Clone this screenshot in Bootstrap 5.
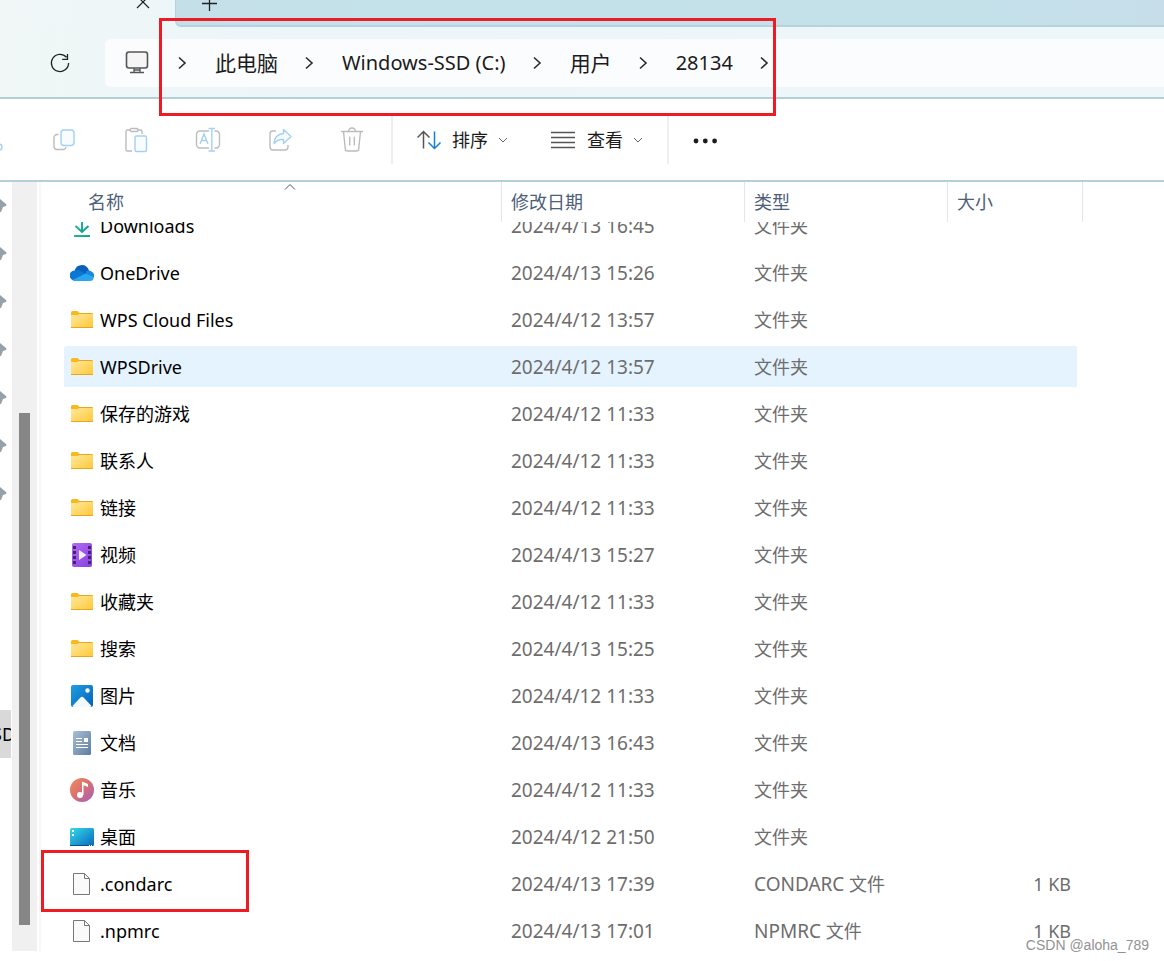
<!DOCTYPE html>
<html lang="zh-CN">
<head>
<meta charset="utf-8">
<meta name="viewport" content="width=device-width, initial-scale=1">
<title>28134</title>
<link href="https://cdn.jsdelivr.net/npm/bootstrap@5.3.0/dist/css/bootstrap.min.css" rel="stylesheet">
<style>
  body { font-family: "Noto Sans", "Noto Sans CJK SC", sans-serif; font-size: 18px; line-height: 24px; color: #000; background: #fff; }
  button { color: #1b1b1b; }
  svg { flex: none; display: block; }
  .tool { background: none; border: 0; padding: 0; display: flex; align-items: center; }
  /* tab strip */
  .tabs { height: 27px; background: #edf6f8; }
  .tab-current { width: 175px; background: linear-gradient(90deg, #f1f7f7, #edf6f8); }
  .tab-close { margin-left: 136px; }
  .tab-rest { border: solid #b5d3dd; border-width: 0 0 2px 1px; border-bottom-left-radius: 6px; background: linear-gradient(90deg, #c5dfe8, #c4e2ea 20%, #c4e1ea 80%, #c7deea); }
  .tab-new { margin-left: 26px; }
  /* address bar */
  .address { height: 72px; padding-top: 2px; background: linear-gradient(90deg, #f0f7f6, #edf5f9 25%, #edf6f9); border-bottom: 2px solid #b3d0d9; }
  .refresh { width: 105px; padding-left: 48px; }
  .path-box { height: 48px; background: #fbfcfe; border-radius: 6px 0 0 6px; padding-left: 20px; }
  .path-latin { font-size: 20px; }
  .path-cjk { font-size: 21px; }
  .crumb { padding: 0 23px 0 25px; }
  .crumb-first { margin-left: 25px; }
  .frame { position: absolute; border: 3px solid #ed1c24; pointer-events: none; z-index: 2; }
  .frame-path { left: 54px; top: -21px; width: 617px; height: 98px; }
  .frame-file { left: -23px; top: -13px; width: 208px; height: 62px; }
  /* command bar */
  .commands { height: 83px; border-bottom: 2px solid #b3d0d9; }
  .icon-btn { width: 72px; justify-content: center; }
  .cut-btn { width: 28px; }
  .sep { width: 2px; height: 48px; background: #efefef; }
  .sep-first { margin-left: 3px; }
  .menu-caret { margin-left: 10px; }
  .sort-btn { gap: 7px; }
  .view-btn { gap: 10px; padding-left: 41px; }
  .sort-btn .menu-caret { margin-left: 3px; }
  .view-btn .menu-caret { margin-left: 0; }
  /* side pane and scrollbar */
  .side { width: 12px; }
  .side-item { height: 48px; }
  .side-item svg { margin-bottom: 2px; }
  .side-gap { height: 192px; }
  .side-active { width: 11px; background: #d9d9d9; text-indent: -8px; }
  .scroll-track { width: 25px; padding: 0 7px; background: #f0f0f0; margin-bottom: 10px; }
  .scroll-thumb { background: #868686; }
  .divider { width: 2px; margin: 0 23px 10px 2px; background: #f7f7f7; }
  /* file list */
  .files { width: 1019px; table-layout: fixed; border-collapse: separate; border-spacing: 0; }
  .files th { height: 40px; padding: 0 9px; border-right: 1px solid #e5e5e5; font-weight: 400; color: #4c607a; position: relative; }
  .files th:first-child { padding-left: 24px; }
  .files td { height: 47px; padding: 0 9px; border: solid transparent; border-width: 2px 0 4px; background-clip: padding-box; color: #6d6d6d; }
  .files td:first-child { padding-left: 6px; }
  .files td:last-child { padding-right: 6px; border-right-width: 6px; text-align: right; }
  .files td:nth-child(2), .kind { font-size: 19px; }
  .files .partial td { height: 28px; border-top-width: 0; }
  .crop { height: 24px; overflow: hidden; display: flex; align-items: flex-end; }
  .crop > * { margin-bottom: 8px; }
  .files a { color: #000; text-decoration: none; display: flex; align-items: center; gap: 6px; }
  .files .hovered td { background-color: #e5f3ff; }
  .hovered td:first-child { border-radius: 4px 0 0 4px; }
  .sort-mark { position: absolute; left: 220px; top: 1px; }
  .c-name { width: 438px; } .c-date { width: 243px; } .c-type { width: 203px; } .c-size { width: 135px; }
  .watermark { position: absolute; right: 15px; bottom: 6px; font: 14px/20px "Liberation Sans", sans-serif; color: #929292; text-shadow: 1px 1px 0 #fff; }
</style>
</head>
<body>
<svg width="0" height="0" class="position-absolute" aria-hidden="true">
  <defs>
    <linearGradient id="gFolder" x1="0" y1="0" x2="1" y2="1"><stop offset="0" stop-color="#ffe9a0"/><stop offset="1" stop-color="#ffc937"/></linearGradient>
    <linearGradient id="gDown" x1="0" y1="0" x2="1" y2="1"><stop offset="0" stop-color="#2cc583"/><stop offset="1" stop-color="#0c9a97"/></linearGradient>
    <linearGradient id="gVideo" x1="0" y1="0" x2="1" y2="1"><stop offset="0" stop-color="#b36bf2"/><stop offset="1" stop-color="#8540e0"/></linearGradient>
    <linearGradient id="gPic" x1="0" y1="0" x2="1" y2="1"><stop offset="0" stop-color="#1e9fe6"/><stop offset="1" stop-color="#0560b5"/></linearGradient>
    <linearGradient id="gDoc" x1="0" y1="0" x2="1" y2="1"><stop offset="0" stop-color="#a9c0d6"/><stop offset="1" stop-color="#5d7d9f"/></linearGradient>
    <linearGradient id="gMusic" x1="0" y1="0" x2="1" y2="1"><stop offset="0" stop-color="#f58a55"/><stop offset=".5" stop-color="#d86f75"/><stop offset="1" stop-color="#a05fbd"/></linearGradient>
    <linearGradient id="gDesk" x1="0" y1="0" x2="1" y2="1"><stop offset="0" stop-color="#35dce8"/><stop offset="1" stop-color="#0967bd"/></linearGradient>
    <symbol id="folder" viewBox="0 0 24 24"><path d="M1 4.500a1.500 1.500 0 0 1 1.500-1.500h5L9.500 5V9H1z" fill="#f9b81d"/><path d="M1 7h7l2-2h12a1 1 0 0 1 1 1V20H1z" fill="url(#gFolder)"/><path d="M9 5.500h13.500M1 19.500h22" stroke="#e9a620" stroke-width="1"/></symbol>
    <symbol id="cloud" viewBox="0 0 24 24"><path d="M4.500 10Q6 4.200 12 4q5 0 7 5.500l0 3-9 3z" fill="#0a5fb8"/><path d="M5 19.500A5 5 0 0 1 4.500 9.400q3.500-1.300 6.500.9l6 3.700-12 5.500z" fill="#0b77d4"/><path d="M16 10.500q2.500-2 5.500 0a5 5 0 0 1 2.300 6l-8-3z" fill="#1689dc"/><path d="M2.500 19 15.500 12.500l8.300 4a4 4 0 0 1-4 3.500H5q-1.500 0-2.500-1z" fill="#2aa6ee"/></symbol>
    <symbol id="video" viewBox="0 0 24 24"><rect x="2" width="20" height="24" rx="2" fill="url(#gVideo)"/><path d="M3 3h3v3H3zm0 5h3v3H3zm0 5h3v3H3zm0 5h3v3H3zM18 3h3v3h-3zm0 5h3v3h-3zm0 5h3v3h-3zm0 5h3v3h-3z" fill="#43246d"/><path d="m9 7 7.500 5L9 17z" fill="#f6efff"/></symbol>
    <symbol id="picture" viewBox="0 0 24 24"><rect x="1" y="1" width="22" height="22" rx="2" fill="url(#gPic)"/><path d="m2.500 22 8-8.600q1.500-1.400 3 0l8 8.600q-.5 1-1.500 1H4q-1 0-1.500-1z" fill="#f4f9fe"/><circle cx="17.500" cy="6.500" r="2.200" fill="#fff"/></symbol>
    <symbol id="document" viewBox="0 0 24 24"><rect x="3" width="18" height="24" rx="1.500" fill="url(#gDoc)"/><path d="M6 7.500h6M6 10.500h6M6 13.500h12M6 16.500h12" stroke="#fff" stroke-width="1.200"/><path d="M14 7h4v4h-4z" fill="#fff"/></symbol>
    <symbol id="music" viewBox="0 0 24 24"><circle cx="12" cy="12" r="12" fill="url(#gMusic)"/><circle cx="10" cy="17" r="3" fill="#fff"/><path d="M12 17V4.500q0-1 1.200-.6L18 6v3l-4.500-1.800V17z" fill="#fff"/></symbol>
    <symbol id="desktop" viewBox="0 0 24 24"><rect y="3" width="24" height="18" rx="1.500" fill="url(#gDesk)"/><path d="M2 5h2v2H2zm0 4h2v2H2z" fill="#fff"/><path d="M0 20.500h24" stroke="#0b4f86"/><path d="M19 20.500h4.500" stroke="#fff" stroke-dasharray="1 1"/></symbol>
    <symbol id="file" viewBox="0 0 24 24"><path d="M3.500 1.500h11l5 5v16h-16z" fill="#fafafa" stroke="#777"/><path d="M14.500 1.500v5h5" fill="none" stroke="#777"/></symbol>
    <symbol id="download" viewBox="0 0 24 24"><path d="M12 4v14M5.500 12 12 18l6.500-6" fill="none" stroke="url(#gDown)" stroke-width="2"/><path d="M4 21h16v2H4z" fill="url(#gDown)"/></symbol>
    <symbol id="chev" viewBox="0 0 16 16"><path d="m5 2.500 6 5.500-6 5.500" fill="none" stroke="#2b2b2b" stroke-width="1.600"/></symbol>
    <symbol id="down" viewBox="0 0 10 10"><path d="m1 3 4 4 4-4" fill="none" stroke="#666"/></symbol>
    <symbol id="pin" viewBox="0 0 7 16"><path d="M0 2 6 7q1 1 0 2l-3 1-2 5H0z" fill="#95a1a9"/></symbol>
  </defs>
</svg>

<div class="d-flex flex-column min-vh-100 position-relative overflow-hidden">
  <div class="tabs d-flex">
    <div class="tab-current"><button class="tool tab-close" aria-label="关闭"><svg width="14" height="11" viewBox="0 0 14 11"><path d="m1-4 12 12M13-4 1 8" stroke="#222" stroke-width="1.200"/></svg></button></div>
    <div class="tab-rest flex-fill"><button class="tool tab-new" aria-label="新标签"><svg width="15" height="12" viewBox="0 0 15 12"><path d="M0 3.500h15M7.500-4v15" stroke="#222" stroke-width="1.300"/></svg></button></div>
  </div>

  <div class="address d-flex align-items-center">
    <button class="tool refresh" aria-label="刷新"><svg width="24" height="24" viewBox="0 0 24 24"><path d="M18.500 6.300A8.600 8.600 0 1 0 20.600 12M19.500 3v5.300h-5.300" fill="none" stroke="#222" stroke-width="1.300"/></svg></button>
    <nav class="path-box flex-fill d-flex align-items-center position-relative" aria-label="路径">
      <svg width="24" height="24" viewBox="0 0 24 24"><rect x="1.500" y="1" width="21" height="16" rx="2.500" fill="#f5f5f5" stroke="#555" stroke-width="1.600"/><path d="M9 17v4M15 17v4M5 21.500h14M9 19h6" stroke="#555" stroke-width="1.300"/></svg>
      <svg class="crumb-first" width="16" height="16"><use href="#chev"/></svg>
      <button class="tool crumb path-cjk">此电脑</button>
      <svg width="16" height="16"><use href="#chev"/></svg>
      <button class="tool crumb path-latin">Windows-SSD (C:)</button>
      <svg width="16" height="16"><use href="#chev"/></svg>
      <button class="tool crumb path-cjk">用户</button>
      <svg width="16" height="16"><use href="#chev"/></svg>
      <button class="tool crumb path-latin">28134</button>
      <svg width="16" height="16"><use href="#chev"/></svg>
      <span class="frame frame-path"></span>
    </nav>
  </div>

  <div class="commands d-flex align-items-center">
    <button class="tool cut-btn" aria-label="剪切"><svg width="4" height="24" viewBox="0 0 4 24"><circle cx="-1" cy="19" r="3" fill="none" stroke="#9dcbee" stroke-width="1.300"/></svg></button>
    <button class="tool icon-btn" aria-label="复制"><svg width="24" height="24" viewBox="0 0 24 24" fill="none" stroke-width="1.400"><path d="M6.500 6.500H5A3 3 0 0 0 2 9.500v9a3 3 0 0 0 3 3h6a3 3 0 0 0 3-2.500" stroke="#bcbcbc"/><rect x="9" y="2" width="13" height="15.500" rx="3" fill="#f8fcff" stroke="#a4d1f2"/></svg></button>
    <button class="tool icon-btn" aria-label="粘贴"><svg width="24" height="26" viewBox="0 0 24 26" fill="none" stroke-width="1.400"><path d="M8 24H3.500A1.500 1.500 0 0 1 2 22.500v-18A1.500 1.500 0 0 1 3.500 3H6m8 0h2.500A1.500 1.500 0 0 1 18 4.500V7" stroke="#bcbcbc"/><rect x="6" y="1.500" width="8" height="3" rx="1.500" stroke="#bcbcbc"/><rect x="11" y="9" width="11.500" height="15.500" rx="1.500" fill="#f8fcff" stroke="#a4d1f2"/></svg></button>
    <button class="tool icon-btn" aria-label="重命名"><svg width="26" height="26" viewBox="0 0 26 26" fill="none" stroke-width="1.400"><path d="M14 4H5a3.500 3.500 0 0 0-3.500 3.500v10A3.500 3.500 0 0 0 5 21h9M19.500 4H21a3.500 3.500 0 0 1 3.500 3.500v10A3.500 3.500 0 0 1 21 21h-1.500" stroke="#bcbcbc"/><path d="m5 17 4-10 4 10M6.300 13.500h5.400M16.800 1.500v22M13.500 1.500H20M13.500 24H20" stroke="#a4d1f2"/></svg></button>
    <button class="tool icon-btn" aria-label="共享"><svg width="24" height="24" viewBox="0 0 24 24" fill="none" stroke-width="1.400"><path d="M8 3H5a3 3 0 0 0-3 3v13a3 3 0 0 0 3 3h12a3 3 0 0 0 3-3v-2" stroke="#bcbcbc"/><path d="M15.500 1.500 23 8.500l-7.500 7v-4q-6-.5-9.500 4Q6.500 6.500 15.500 5.500z" fill="#f8fcff" stroke="#a4d1f2" stroke-linejoin="round"/></svg></button>
    <button class="tool icon-btn" aria-label="删除"><svg width="24" height="26" viewBox="0 0 24 26" fill="none" stroke="#bcbcbc" stroke-width="1.400"><path d="M1 4.500h22M3.500 4.500 5.300 22a2 2 0 0 0 2 2h9.400a2 2 0 0 0 2-2L20.500 4.500M8.500 4.500a3.500 3.500 0 0 1 7 0M9.700 9.500v9M14.300 9.500v9"/></svg></button>
    <span class="sep sep-first"></span>
    <button class="tool sort-btn ps-4"><svg width="28" height="24" viewBox="0 0 28 24" fill="none" stroke-width="1.500"><path d="M6.500 20.500V3.500M.5 9.500l6-6 6 6" stroke="#555"/><path d="M17.500 3.500v17M11.500 14.500l6 6 6-6" stroke="#1280d8"/></svg>排序<svg class="menu-caret" width="10" height="10"><use href="#down"/></svg></button>
    <button class="tool view-btn"><svg width="28" height="24" viewBox="0 0 28 24"><path d="M2 4.500h24M2 9.500h24M2 14.500h24M2 19.500h24" stroke="#555" stroke-width="1.300"/></svg>查看<svg class="menu-caret" width="10" height="10"><use href="#down"/></svg></button>
    <span class="sep ms-4"></span>
    <button class="tool icon-btn" aria-label="更多"><svg width="26" height="8" viewBox="0 0 26 8" fill="#1b1b1b"><circle cx="4" cy="5" r="2.400"/><circle cx="13.300" cy="5" r="2.400"/><circle cx="22.600" cy="5" r="2.400"/></svg></button>
  </div>

  <main class="d-flex flex-fill">
    <div class="side overflow-hidden flex-shrink-0">
      <div class="side-item d-flex align-items-center"><svg width="7" height="16"><use href="#pin"/></svg></div>
      <div class="side-item d-flex align-items-center"><svg width="7" height="16"><use href="#pin"/></svg></div>
      <div class="side-item d-flex align-items-center"><svg width="7" height="16"><use href="#pin"/></svg></div>
      <div class="side-item d-flex align-items-center"><svg width="7" height="16"><use href="#pin"/></svg></div>
      <div class="side-item d-flex align-items-center"><svg width="7" height="16"><use href="#pin"/></svg></div>
      <div class="side-item d-flex align-items-center"><svg width="7" height="16"><use href="#pin"/></svg></div>
      <div class="side-item d-flex align-items-center"><svg width="7" height="16"><use href="#pin"/></svg></div>
      <div class="side-gap"></div>
      <div class="side-item side-active d-flex align-items-center overflow-hidden">SD</div>
    </div>
    <div class="scroll-track d-flex flex-column flex-shrink-0">
      <div style="flex:231"></div><div class="scroll-thumb" style="flex:512"></div><div style="flex:26"></div>
    </div>
    <div class="divider flex-shrink-0"></div>
    <div class="flex-fill">
      <table class="files">
        <colgroup><col class="c-name"><col class="c-date"><col class="c-type"><col class="c-size"></colgroup>
        <thead><tr><th scope="col">名称<svg class="sort-mark" width="12" height="8" viewBox="0 0 12 8"><path d="m1 6.500 5-5 5 5" fill="none" stroke="#555"/></svg></th><th scope="col">修改日期</th><th scope="col">类型</th><th scope="col">大小</th></tr></thead>
        <tbody>
          <tr class="partial"><td><div class="crop"><a href="#"><svg width="24" height="24"><use href="#download"/></svg>Downloads</a></div></td><td><div class="crop"><span>2024/4/13 16:45</span></div></td><td><div class="crop"><span>文件夹</span></div></td><td></td></tr>
          <tr><td><a href="#"><svg width="24" height="24"><use href="#cloud"/></svg>OneDrive</a></td><td>2024/4/13 15:26</td><td>文件夹</td><td></td></tr>
          <tr><td><a href="#"><svg width="24" height="24"><use href="#folder"/></svg>WPS Cloud Files</a></td><td>2024/4/12 13:57</td><td>文件夹</td><td></td></tr>
          <tr class="hovered"><td><a href="#"><svg width="24" height="24"><use href="#folder"/></svg>WPSDrive</a></td><td>2024/4/12 13:57</td><td>文件夹</td><td></td></tr>
          <tr><td><a href="#"><svg width="24" height="24"><use href="#folder"/></svg>保存的游戏</a></td><td>2024/4/12 11:33</td><td>文件夹</td><td></td></tr>
          <tr><td><a href="#"><svg width="24" height="24"><use href="#folder"/></svg>联系人</a></td><td>2024/4/12 11:33</td><td>文件夹</td><td></td></tr>
          <tr><td><a href="#"><svg width="24" height="24"><use href="#folder"/></svg>链接</a></td><td>2024/4/12 11:33</td><td>文件夹</td><td></td></tr>
          <tr><td><a href="#"><svg width="24" height="24"><use href="#video"/></svg>视频</a></td><td>2024/4/13 15:27</td><td>文件夹</td><td></td></tr>
          <tr><td><a href="#"><svg width="24" height="24"><use href="#folder"/></svg>收藏夹</a></td><td>2024/4/12 11:33</td><td>文件夹</td><td></td></tr>
          <tr><td><a href="#"><svg width="24" height="24"><use href="#folder"/></svg>搜索</a></td><td>2024/4/13 15:25</td><td>文件夹</td><td></td></tr>
          <tr><td><a href="#"><svg width="24" height="24"><use href="#picture"/></svg>图片</a></td><td>2024/4/12 11:33</td><td>文件夹</td><td></td></tr>
          <tr><td><a href="#"><svg width="24" height="24"><use href="#document"/></svg>文档</a></td><td>2024/4/13 16:43</td><td>文件夹</td><td></td></tr>
          <tr><td><a href="#"><svg width="24" height="24"><use href="#music"/></svg>音乐</a></td><td>2024/4/12 11:33</td><td>文件夹</td><td></td></tr>
          <tr><td><a href="#"><svg width="24" height="24"><use href="#desktop"/></svg>桌面</a></td><td>2024/4/12 21:50</td><td>文件夹</td><td></td></tr>
          <tr><td class="position-relative"><a href="#"><svg width="24" height="24"><use href="#file"/></svg>.condarc</a><span class="frame frame-file"></span></td><td>2024/4/13 17:39</td><td><span class="kind">CONDARC</span> 文件</td><td>1 KB</td></tr>
          <tr><td><a href="#"><svg width="24" height="24"><use href="#file"/></svg>.npmrc</a></td><td>2024/4/13 17:01</td><td><span class="kind">NPMRC</span> 文件</td><td>1 KB</td></tr>
        </tbody>
      </table>
    </div>
  </main>
  <div class="watermark">CSDN @aloha_789</div>
</div>
<script src="https://cdn.jsdelivr.net/npm/bootstrap@5.3.0/dist/js/bootstrap.bundle.min.js"></script>
</body>
</html>
